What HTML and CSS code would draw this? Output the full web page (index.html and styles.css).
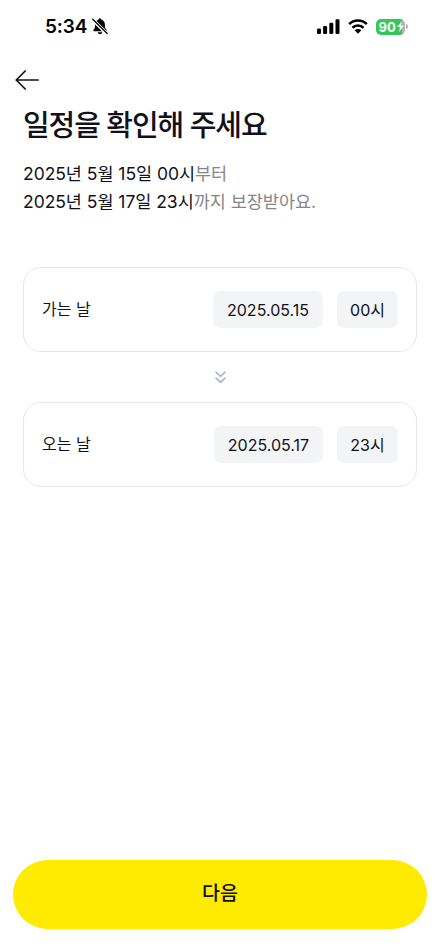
FILE: index.html
```html
<!DOCTYPE html>
<html lang="ko">
<head>
<meta charset="utf-8">
<meta name="viewport" content="width=device-width, initial-scale=1">
<title>일정 확인</title>
<link rel="stylesheet" href="styles.css">
</head>
<body>
<div class="screen">
  <header class="status">
    <span class="time">5:34</span>
    <svg class="bell" width="16" height="17" viewBox="0 0 16 17">
      <path d="M8 .6C9 .6 9.5 1.100 9.600 1.700C11.900 2.500 12.900 4.300 12.900 6.800C12.900 9.800 13.300 10.500 14.300 11.500C15 12.200 14.800 13.300 13.800 13.300H2.200C1.200 13.300 1 12.200 1.700 11.500C2.700 10.500 3.100 9.800 3.100 6.800C3.100 4.300 4.100 2.500 6.400 1.700C6.500 1.100 7 .6 8 .6Z"/>
      <path d="M5.700 14.300H10.300C10 15.700 9.200 16.200 8 16.200S6 15.700 5.700 14.300Z"/>
      <path class="bell-gap" d="M.3 1.300L15.300 16"/>
      <path class="bell-slash" d="M.7 1.300L15.200 15.500"/>
    </svg>
    <svg class="signal" width="23" height="15" viewBox="0 0 23 15">
      <rect x="0" y="9.500" width="4" height="5.500" rx="1.200"/>
      <rect x="6.100" y="7" width="4" height="8" rx="1.200"/>
      <rect x="12.300" y="3.700" width="4" height="11.300" rx="1.200"/>
      <rect x="18.500" y="0.300" width="4" height="14.700" rx="1.200"/>
    </svg>
    <svg class="wifi" width="20" height="15" viewBox="0 0 20 15">
      <path class="wave" d="M1.200 5.200C6.100.3 13.900.3 18.800 5.200M4.500 8.700C7.600 5.700 12.400 5.700 15.500 8.700"/>
      <path d="M6.600 11.200C8.500 9.500 11.500 9.500 13.400 11.200L10 14.700Z"/>
    </svg>
    <div class="battery">
      <span class="level">90</span>
      <svg class="bolt" width="7" height="11" viewBox="0 0 7 11"><path d="M4.800 0L.3 6H3L2.100 11L6.800 4.600H4Z"/></svg>
    </div>
    <span class="battery-cap"></span>
  </header>
  <nav class="nav">
    <svg class="back" width="24" height="20" viewBox="0 0 24 20"><path d="M10.200 1L1.200 10L10.200 19M1.200 10H23.200"/></svg>
  </nav>
  <main class="content">
    <h1 class="title">일정을 확인해 주세요</h1>
    <p class="summary"><span class="line first"><b>2025년 5월 15일 00시</b>부터</span><span class="line"><b>2025년 5월 17일 23시</b>까지 보장받아요.</span></p>
    <section class="card">
      <span class="label">가는 날</span>
      <span class="chip date">2025.05.15</span>
      <span class="chip hour">00시</span>
    </section>
    <div class="divider">
      <svg class="chevrons" width="12" height="13" viewBox="0 0 12 13"><path d="M2 1.200L6.500 5.300L11 1.200M2 7.200L6.500 11.300L11 7.200"/></svg>
    </div>
    <section class="card">
      <span class="label">오는 날</span>
      <span class="chip date late">2025.05.17</span>
      <span class="chip hour">23시</span>
    </section>
  </main>
  <footer class="footer">
    <button class="next" type="button">다음</button>
  </footer>
</div>
</body>
</html>
```
FILE: styles.css
```css
* {
  box-sizing: border-box;
}

body {
  margin: 0;
  background: #fff;
  color: #111219;
  font-family: Inter, "Noto Sans CJK KR", sans-serif;
}

.screen {
  display: flex;
  flex-direction: column;
  width: 100%;
  height: 950px;
  overflow: hidden;
}

.status {
  display: flex;
  align-items: center;
  height: 53px;
  padding: 0 28px 0 45px;
  color: #000;
}

.time {
  width: 43px;
  padding-top: 1px;
  font-size: 19px;
  font-weight: 600;
  line-height: 24px;
  letter-spacing: -0.1px;
  white-space: nowrap;
}

.bell {
  margin-left: 4px;
}

.bell-gap {
  stroke: #fff;
  stroke-width: 3.4;
}

.bell-slash {
  stroke: #000;
  stroke-width: 1.3;
  stroke-linecap: round;
}

.signal {
  margin-left: auto;
}

.wifi {
  margin-left: 8px;
}

.wave {
  fill: none;
  stroke: #000;
  stroke-width: 2.6;
}

.battery {
  display: flex;
  align-items: center;
  width: 29px;
  height: 16px;
  margin-left: 8px;
  padding-left: 2.500px;
  border-radius: 5px;
  background: linear-gradient(90deg, #34c759 26px, #b4b4b7 26px);
}

.level {
  color: #fff;
  font-size: 13px;
  font-weight: 700;
  line-height: 16px;
}

.bolt {
  margin-left: 1px;
  fill: #fff;
}

.battery-cap {
  width: 2px;
  height: 5px;
  margin: 0 -1px 0 1px;
  border-radius: 0 2px 2px 0;
  background: #b4b4b7;
}

.nav {
  display: flex;
  height: 54px;
  padding: 17px 0 0 15px;
}

.back {
  fill: none;
  stroke: #111219;
  stroke-width: 1.7;
  stroke-linecap: round;
  stroke-linejoin: round;
}

.content {
  flex: 1;
  padding: 0 18px 0 23px;
}

.title {
  margin: 0;
  font-size: 29px;
  font-weight: 500;
  line-height: 38px;
  letter-spacing: -1.100px;
  white-space: nowrap;
}

.summary {
  margin: 15px 0 0;
  color: #85868b;
  font-size: 17.500px;
  line-height: 27.500px;
  letter-spacing: -0.040px;
  white-space: nowrap;
}

.summary b {
  color: #111219;
  font-weight: 400;
}

.line {
  display: block;
}

.card {
  display: flex;
  align-items: center;
  height: 85px;
  padding: 0 18px;
  border: 1px solid #e7e7e9;
  border-radius: 18px;
  font-size: 16px;
}

.summary + .card {
  margin-top: 52px;
}

.label {
  margin-right: auto;
  padding-bottom: 3px;
}

.chip {
  display: flex;
  align-items: center;
  justify-content: center;
  height: 37px;
  border-radius: 7px;
  background: #f3f4f6;
  white-space: nowrap;
}

.date {
  width: 110px;
}

.late {
  width: 109px;
}

.hour {
  width: 61px;
  margin-left: 14px;
  padding-bottom: 2px;
}

.divider {
  display: flex;
  align-items: center;
  justify-content: center;
  height: 50px;
}

.chevrons {
  fill: none;
  stroke: #a9bbcf;
  stroke-width: 1.7;
  stroke-linecap: round;
  stroke-linejoin: round;
}

.footer {
  padding: 0 8px 21px 13px;
}

.next {
  display: block;
  width: 100%;
  height: 69px;
  padding: 0 0 2px;
  border: 0;
  border-radius: 35px;
  background: #ffeb00;
  color: #111219;
  font: 500 19.500px/67px Inter, "Noto Sans CJK KR", sans-serif;
}
```
